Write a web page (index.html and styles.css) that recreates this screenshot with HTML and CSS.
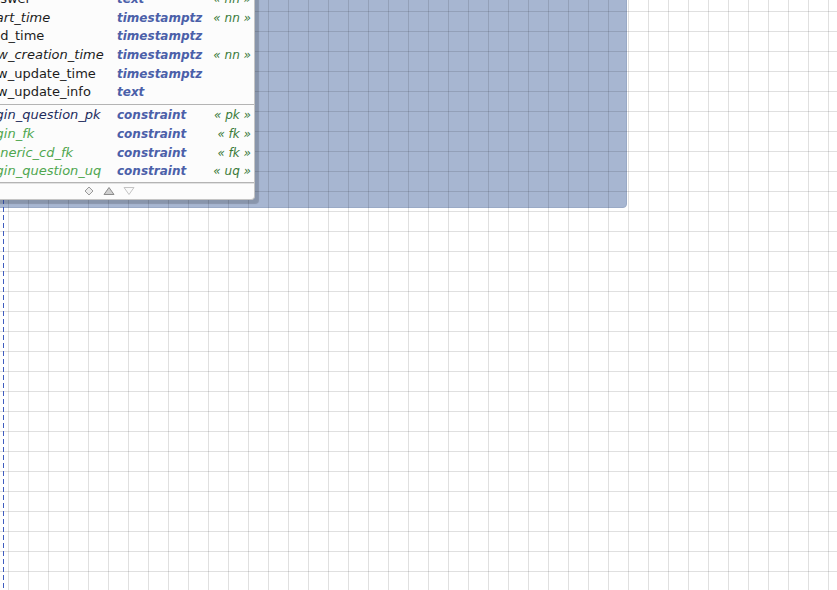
FILE: index.html
```html
<!DOCTYPE html>
<html>
<head>
<meta charset="utf-8">
<link rel="stylesheet" href="styles.css">
</head>
<body>
<div class="canvas">
  <div class="group"></div>
  <div class="grid"></div>
  <div class="link"></div>
  <div class="table">
    <div class="section">
      <span class="name">answer</span><span class="type">text</span><span class="tag">« nn »</span>
      <span class="name nn">start_time</span><span class="type">timestamptz</span><span class="tag">« nn »</span>
      <span class="name">end_time</span><span class="type">timestamptz</span><span class="tag"></span>
      <span class="name nn">row_creation_time</span><span class="type">timestamptz</span><span class="tag">« nn »</span>
      <span class="name">row_update_time</span><span class="type">timestamptz</span><span class="tag"></span>
      <span class="name">row_update_info</span><span class="type">text</span><span class="tag"></span>
    </div>
    <div class="section cons">
      <span class="name pk">login_question_pk</span><span class="type">constraint</span><span class="tag">« pk »</span>
      <span class="name fk">login_fk</span><span class="type">constraint</span><span class="tag">« fk »</span>
      <span class="name fk">generic_cd_fk</span><span class="type">constraint</span><span class="tag">« fk »</span>
      <span class="name fk">login_question_uq</span><span class="type">constraint</span><span class="tag">« uq »</span>
    </div>
    <div class="foot">
      <svg width="12" height="12" viewBox="0 0 12 12"><path d="M6 2 L10 6 L6 10 L2 6 Z" fill="#ececec" stroke="#9a9a9a" stroke-width="1"/></svg>
      <svg width="12" height="12" viewBox="0 0 12 12"><path d="M6 2.5 L11 9.5 L1 9.5 Z" fill="#cfcfcf" stroke="#8c8c8c" stroke-width="1"/></svg>
      <svg width="12" height="12" viewBox="0 0 12 12"><path d="M1 2.5 L11 2.5 L6 9.5 Z" fill="#fafafa" stroke="#c4c4c4" stroke-width="1"/></svg>
    </div>
  </div>
</div>
</body>
</html>
```
FILE: styles.css
```css
html, body {
  margin: 0;
  padding: 0;
  background: #ffffff;
}

.canvas {
  position: relative;
  width: 837px;
  height: 590px;
  overflow: hidden;
  background: #ffffff;
  font-family: "DejaVu Sans", sans-serif;
  font-size: 12px;
}

.group {
  position: absolute;
  left: -10px;
  top: -10px;
  width: 635px;
  height: 216px;
  background: #a7b6d1;
  border: 1px solid #9aaac6;
  border-radius: 4px;
}

.grid {
  position: absolute;
  inset: 0;
  background-image:
    linear-gradient(to right, rgba(0, 0, 0, 0.12) 1px, transparent 1px),
    linear-gradient(to bottom, rgba(0, 0, 0, 0.12) 1px, transparent 1px);
  background-size: 20px 20px;
  background-position: 8px 11px;
}

.link {
  position: absolute;
  left: 3px;
  top: 199px;
  width: 1px;
  bottom: 0;
  background-image: linear-gradient(to bottom, #3f5cbf 5px, transparent 5px);
  background-size: 1px 8px;
}

.table {
  position: absolute;
  left: -19px;
  top: -10px;
  width: 272px;
  background: #fcfcfc;
  border: 1px solid #c4c4c4;
  border-top: none;
  border-radius: 0 0 4px 4px;
  box-shadow: 4px 4px 1px rgba(0, 0, 0, 0.18);
}

.section {
  display: grid;
  grid-template-columns: 133px auto 1fr;
  grid-auto-rows: 18.7px;
  align-items: center;
  padding: 0 3px 2px 2px;
  line-height: 18.7px;
  white-space: nowrap;
  border-bottom: 1px solid #b4b4b4;
}

.section.cons {
  padding-top: 1px;
  padding-bottom: 1px;
}

.name {
  font-size: 13px;
  color: #1c1c1c;
}

.name.nn {
  font-style: italic;
}

.name.pk {
  font-style: italic;
  color: #1d2c5c;
}

.name.fk {
  font-style: italic;
  color: #4fa64f;
}

.type {
  font-weight: bold;
  font-style: italic;
  color: #4b60a9;
}

.tag {
  text-align: right;
  font-style: italic;
  color: #3a7a3a;
}

.foot {
  display: flex;
  align-items: center;
  gap: 8px;
  height: 15px;
  padding-left: 101px;
  border-top: 1px solid #e2e2e2;
}

.foot svg {
  display: block;
}
```
